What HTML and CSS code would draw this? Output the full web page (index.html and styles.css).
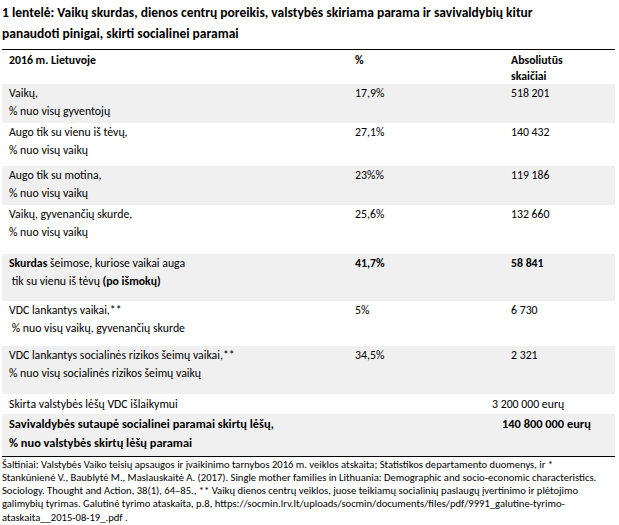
FILE: index.html
```html
<!DOCTYPE html>
<html lang="lt">
<head>
<meta charset="utf-8">
<title>1 lentelė</title>
<link rel="stylesheet" href="styles.css">
</head>
<body>
<div class="page">
  <h1 class="title">1 lentelė: Vaikų skurdas, dienos centrų poreikis, valstybės skiriama parama ir savivaldybių kitur<br>panaudoti pinigai, skirti socialinei paramai</h1>
  <table class="data">
    <colgroup>
      <col class="c1"><col class="c2"><col class="c3">
    </colgroup>
    <thead>
      <tr class="head">
        <th>2016 m. Lietuvoje</th>
        <th>%</th>
        <th>Absoliutūs<br>skaičiai</th>
      </tr>
    </thead>
    <tbody>
      <tr class="gray h39">
        <td>Vaikų,<br>% nuo visų gyventojų</td>
        <td>17,9%</td>
        <td>518 201</td>
      </tr>
      <tr class="h43">
        <td>Augo tik su vienu iš tėvų,<br>% nuo visų vaikų</td>
        <td>27,1%</td>
        <td>140 432</td>
      </tr>
      <tr class="gray h39">
        <td>Augo tik su motina,<br>% nuo visų vaikų</td>
        <td>23%%</td>
        <td>119 186</td>
      </tr>
      <tr class="h49">
        <td>Vaikų, gyvenančių skurde,<br>% nuo visų vaikų</td>
        <td>25,6%</td>
        <td>132 660</td>
      </tr>
      <tr class="gray h47">
        <td><b>Skurdas</b> šeimose, kuriose vaikai auga<br>&nbsp;tik su vienu iš tėvų <b>(po išmokų)</b></td>
        <td><b>41,7%</b></td>
        <td><b>58 841</b></td>
      </tr>
      <tr class="h45">
        <td>VDC lankantys vaikai,**<br>&nbsp;% nuo visų vaikų, gyvenančių skurde</td>
        <td>5%</td>
        <td>6 730</td>
      </tr>
      <tr class="gray h48">
        <td>VDC lankantys socialinės rizikos šeimų vaikai,**<br>% nuo visų socialinės rizikos šeimų vaikų</td>
        <td>34,5%</td>
        <td>2 321</td>
      </tr>
      <tr class="h20">
        <td colspan="2">Skirta valstybės lėšų VDC išlaikymui</td>
        <td class="shift-a">3 200 000 eurų</td>
      </tr>
      <tr class="gray h42 strong">
        <td colspan="2">Savivaldybės sutaupė socialinei paramai skirtų lėšų,<br>% nuo valstybės skirtų lėšų paramai</td>
        <td class="shift-b">140 800 000 eurų</td>
      </tr>
    </tbody>
  </table>
  <p class="note">Šaltiniai: Valstybės Vaiko teisių apsaugos ir įvaikinimo tarnybos 2016 m. veiklos atskaita; Statistikos departamento duomenys, ir *<br>Stankūnienė V., Baublytė M., Maslauskaitė A. (2017). Single mother families in Lithuania: Demographic and socio-economic characteristics.<br>Sociology. Thought and Action, 38(1), 64–85., ** Vaikų dienos centrų veiklos, juose teikiamų socialinių paslaugų įvertinimo ir plėtojimo<br>galimybių tyrimas. Galutinė tyrimo ataskaita, p.8, https://socmin.lrv.lt/uploads/socmin/documents/files/pdf/9991_galutine-tyrimo-<br>ataskaita__2015-08-19_.pdf .</p>
</div>
</body>
</html>
```

FILE: styles.css
```css
html, body {
  margin: 0;
  padding: 0;
  background: #ffffff;
}

body {
  font-family: Carlito, Lato, "Open Sans", sans-serif;
  color: #000000;
}

.page {
  padding: 2px 4px 0 2px;
}

.title {
  margin: 0;
  font-size: 13.5px;
  line-height: 21px;
  font-weight: bold;
  height: 47px;
}

.data {
  width: 613px;
  border-collapse: collapse;
  font-size: 11.8px;
  line-height: 18px;
  border-top: 1.5px solid #000;
  border-bottom: 1.5px solid #000;
}

.c1 { width: 346px; }
.c2 { width: 156px; }
.c3 { width: 111px; }

.data th,
.data td {
  text-align: left;
  vertical-align: top;
  padding: 0 0 0 7px;
}

.data th {
  font-weight: bold;
  line-height: 16px;
  padding-top: 2px;
  padding-bottom: 0;
}

.head { height: 33px; }

.gray { background: #f0f0f0; }

.h20 { height: 20px; }
.h39 { height: 39px; }
.h42 { height: 42px; }
.h43 { height: 43px; }
.h45 { height: 45px; }
.h47 { height: 47px; }
.h48 { height: 48px; }
.h49 { height: 49px; }

.gray td { padding-top: 0; }
.h20 td { padding-top: 1px; }

.strong td {
  font-weight: bold;
  font-size: 12.4px;
  line-height: 19px;
}

.shift-a { text-indent: -19px; }
.shift-b { text-indent: -9px; }

.note {
  margin: 1px 0 0 0;
  font-size: 10.6px;
  line-height: 13.3px;
}
```
